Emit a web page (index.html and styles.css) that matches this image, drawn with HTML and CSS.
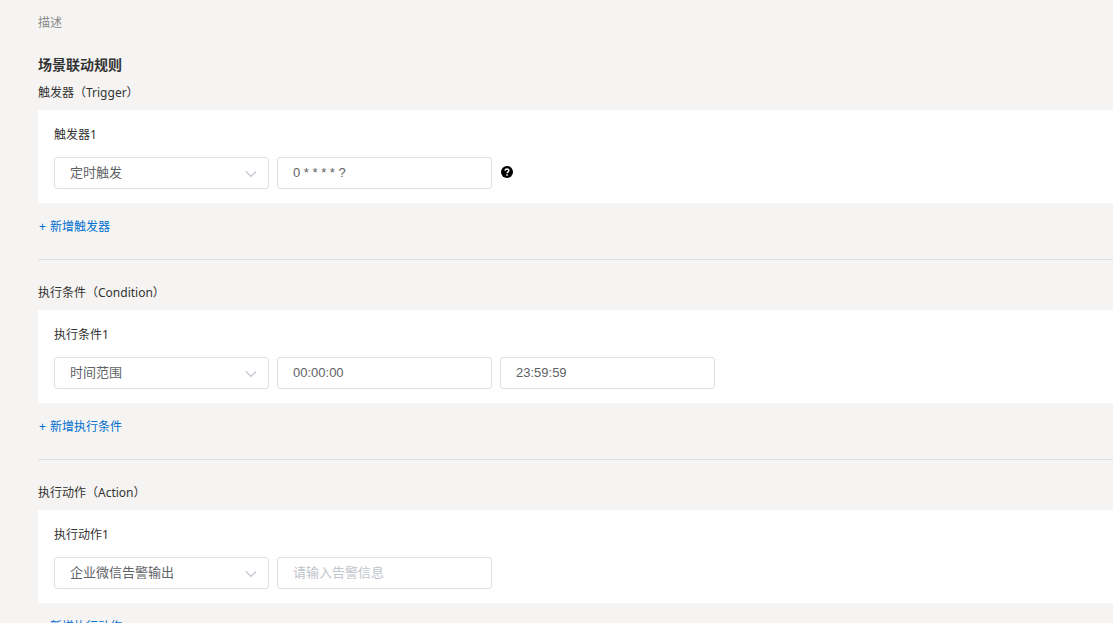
FILE: index.html
```html
<!DOCTYPE html>
<html lang="zh-CN">
<head>
<meta charset="utf-8">
<title>场景联动规则</title>
<link rel="stylesheet" href="styles.css">
</head>
<body>
<main class="page">
  <p class="description">描述</p>
  <h1 class="title">场景联动规则</h1>

  <section class="group">
    <h2 class="group-title">触发器（Trigger）</h2>
    <div class="card">
      <h3 class="card-title">触发器1</h3>
      <div class="row">
        <div class="select-wrap">
          <select class="field" aria-label="触发器类型"><option>定时触发</option></select>
          <svg class="chevron" viewBox="0 0 12 12" aria-hidden="true"><path d="M1 3.5l5 5 5-5"/></svg>
        </div>
        <input class="field" type="text" aria-label="Cron 表达式" value="0 * * * * ?">
        <button class="help" type="button" aria-label="帮助">
          <svg viewBox="0 0 12 12" aria-hidden="true"><circle cx="6" cy="6" r="6"/><path d="M4.1 4.7C4.2 2.3 7.9 2.4 7.8 4.6C7.8 5.8 6.1 5.8 6 7.1M6 8.2v1.5"/></svg>
        </button>
      </div>
    </div>
    <button class="add" type="button"><span>+</span>新增触发器</button>
  </section>

  <section class="group">
    <h2 class="group-title">执行条件（Condition）</h2>
    <div class="card">
      <h3 class="card-title">执行条件1</h3>
      <div class="row">
        <div class="select-wrap">
          <select class="field" aria-label="条件类型"><option>时间范围</option></select>
          <svg class="chevron" viewBox="0 0 12 12" aria-hidden="true"><path d="M1 3.5l5 5 5-5"/></svg>
        </div>
        <input class="field" type="text" aria-label="开始时间" value="00:00:00">
        <input class="field" type="text" aria-label="结束时间" value="23:59:59">
      </div>
    </div>
    <button class="add" type="button"><span>+</span>新增执行条件</button>
  </section>

  <section class="group">
    <h2 class="group-title">执行动作（Action）</h2>
    <div class="card">
      <h3 class="card-title">执行动作1</h3>
      <div class="row">
        <div class="select-wrap">
          <select class="field" aria-label="动作类型"><option>企业微信告警输出</option></select>
          <svg class="chevron" viewBox="0 0 12 12" aria-hidden="true"><path d="M1 3.5l5 5 5-5"/></svg>
        </div>
        <input class="field" type="text" aria-label="告警信息" placeholder="请输入告警信息">
      </div>
    </div>
    <button class="add" type="button"><span>+</span>新增执行动作</button>
  </section>
</main>
</body>
</html>
```

FILE: styles.css
```css
* { box-sizing: border-box; }
html { background: #f5f4f2; scrollbar-width: none; }
body {
  margin: 0;
  color: #333;
  font: 12px/18px "Noto Sans", "Noto Sans CJK SC", sans-serif;
}
.page { padding: 14px 0 0 38px; }
.description { margin: 0 0 23px; color: #888; }
.title { margin: 0 0 9px; font-size: 14px; line-height: 20px; font-weight: 700; }
.group { padding-bottom: 23px; border-bottom: 1px solid #dcdfe6; margin-bottom: 24px; }
.group:last-child { border-bottom: 0; margin-bottom: 0; }
.group-title { margin: 0 0 8px; font-size: 12px; line-height: 18px; font-weight: 400; }
.card { padding: 16px 16px 14px; background: #fff; }
.card-title { margin: 0 0 13px; font-size: 12px; line-height: 18px; font-weight: 400; }
.row { display: flex; align-items: center; gap: 8px; }
.select-wrap { position: relative; }
.field {
  display: block;
  width: 215px;
  height: 32px;
  padding: 0 15px;
  border: 1px solid #dcdfe6;
  border-radius: 3px;
  background: #fff;
  color: #606266;
  font: 13px/18px "Liberation Sans", "Noto Sans CJK SC", sans-serif;
  appearance: none;
}
input.field { padding-bottom: 2px; }
.field::placeholder { color: #c0c4cc; opacity: 1; }
.chevron {
  position: absolute;
  right: 12px;
  top: 11px;
  width: 12px;
  height: 12px;
  fill: none;
  stroke: #c0c4cc;
  stroke-width: 1.2;
  pointer-events: none;
}
.help { width: 14px; height: 14px; padding: 0 1px 2px; border: 0; background: none; }
.help svg { display: block; width: 12px; height: 12px; }
.help circle { fill: #000; }
.help path { fill: none; stroke: #fff; stroke-width: 1.5; }
.add {
  display: flex;
  gap: 4px;
  margin-top: 15px;
  padding: 0 0 0 1px;
  border: 0;
  background: none;
  color: #006fd0;
  font: inherit;
}
```
